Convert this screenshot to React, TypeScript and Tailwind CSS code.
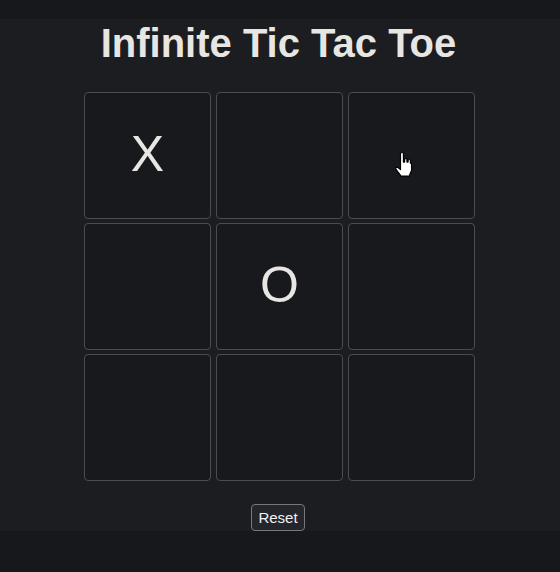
import React from "react";

const cells = ["X", "", "", "", "O", "", "", "", ""];

export default function App() {
  return (
    <div className="w-[560px] h-[572px] bg-[#17181b] pt-[19px] relative" style={{ fontFamily: '"Liberation Sans", Arial, sans-serif' }}>
      <div className="h-[512px] bg-[#1c1d20] flex flex-col items-center">
        <h1 className="text-[40px] font-bold text-[#e8e6e3] leading-none mt-[4px] ml-[-3px]">Infinite Tic Tac Toe</h1>
        <div className="grid grid-cols-[127px_127px_127px] grid-rows-[127px_127px_127px] gap-x-[5px] gap-y-[4px] mt-[29px] ml-[-1px]">
          {cells.map((c, i) => (
            <div
              key={i}
              className="border border-[#4b4c50] rounded-[4px] bg-[#18191c] flex items-center justify-center text-[50px] text-[#e8e6e3] leading-none pb-[3px]"
            >
              {c}
            </div>
          ))}
        </div>
        <button className="mt-[23px] ml-[-4px] h-[27px] px-[6px] border border-[#77787d] rounded-[4px] bg-[#25262b] text-[15px] text-[#f0f0f0] leading-none">
          Reset
        </button>
      </div>
      <svg className="absolute left-[393px] top-[151px]" width="22" height="28" viewBox="0 0 18 24">
        <path
          d="M6.5 1.5 h2 v8 h1 v-3 h2 v3 h1 v-2 h2 v3 h1 v6 l-2 5 h-7 l-4.5 -6 v-1.5 h1.5 l2.5 2 v-14.5 z"
          fill="#ffffff"
          stroke="#000000"
          strokeWidth="1"
          strokeLinejoin="round"
        />
      </svg>
    </div>
  );
}
